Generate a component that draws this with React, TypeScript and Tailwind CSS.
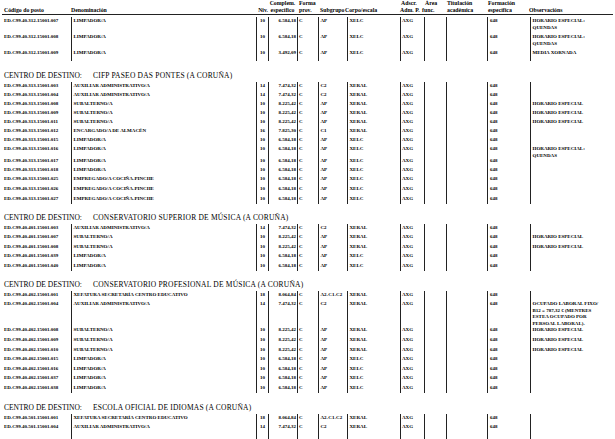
type Row = {
  code: string;
  den: string;
  niv: string;
  comp: string;
  sub: string;
  corpo: string;
  obs?: string[];
  h: string;
};

type Group = {
  title?: string;
  head: string;
  rows: Row[];
};

const LIMP = { den: "LIMPADOR/A", niv: "10", comp: "6.584,18", sub: "AP", corpo: "XELC" };
const SUBAL = { den: "SUBALTERNO/A", niv: "10", comp: "8.225,42", sub: "AP", corpo: "XERAL" };
const AUX = { den: "AUXILIAR ADMINISTRATIVO/A", niv: "14", comp: "7.474,32", sub: "C2", corpo: "XERAL" };
const COC = { den: "EMPREGADO/A COCIÑA-PINCHE", niv: "10", comp: "6.584,18", sub: "AP", corpo: "XELC" };
const XEF = { den: "XEFATURA SECRETARÍA CENTRO EDUCATIVO", niv: "18", comp: "8.064,84", sub: "A2-C1-C2", corpo: "XERAL" };
const HE = ["HORARIO ESPECIAL"];
const HEQ = ["HORARIO ESPECIAL:", "QUENDAS"];

const groups: Group[] = [
  {
    head: "h-[2px]",
    rows: [
      { code: "ED.C99.40.312.15001.007", ...LIMP, obs: HEQ, h: "h-[16px]" },
      { code: "ED.C99.40.312.15001.008", ...LIMP, obs: HEQ, h: "h-[16px]" },
      { code: "ED.C99.40.312.15001.009", ...LIMP, comp: "3.492,09", obs: ["MEDIA XORNADA"], h: "h-[12px]" },
    ],
  },
  {
    title: "CIFP PASEO DAS PONTES (A CORUÑA)",
    head: "h-[21px] pt-[11px]",
    rows: [
      { code: "ED.C99.40.313.15001.003", ...AUX, h: "h-[9px]" },
      { code: "ED.C99.40.313.15001.004", ...AUX, h: "h-[9px]" },
      { code: "ED.C99.40.313.15001.008", ...SUBAL, obs: HE, h: "h-[9px]" },
      { code: "ED.C99.40.313.15001.009", ...SUBAL, obs: HE, h: "h-[9px]" },
      { code: "ED.C99.40.313.15001.011", ...SUBAL, obs: HE, h: "h-[9px]" },
      { code: "ED.C99.40.313.15001.012", den: "ENCARGADO/A DE ALMACÉN", niv: "16", comp: "7.825,30", sub: "C1", corpo: "XERAL", h: "h-[9px]" },
      { code: "ED.C99.40.313.15001.015", ...LIMP, h: "h-[9px]" },
      { code: "ED.C99.40.313.15001.016", ...LIMP, obs: HEQ, h: "h-[12px]" },
      { code: "ED.C99.40.313.15001.017", ...LIMP, h: "h-[9px]" },
      { code: "ED.C99.40.313.15001.018", ...LIMP, h: "h-[9px]" },
      { code: "ED.C99.40.313.15001.025", ...COC, h: "h-[10px]" },
      { code: "ED.C99.40.313.15001.026", ...COC, h: "h-[10px]" },
      { code: "ED.C99.40.313.15001.027", ...COC, h: "h-[9px]" },
    ],
  },
  {
    title: "CONSERVATORIO SUPERIOR DE MÚSICA (A CORUÑA)",
    head: "h-[20px] pt-[10px]",
    rows: [
      { code: "ED.C99.40.401.15001.003", ...AUX, h: "h-[9px]" },
      { code: "ED.C99.40.401.15001.007", ...SUBAL, obs: HE, h: "h-[10px]" },
      { code: "ED.C99.40.401.15001.008", ...SUBAL, obs: HE, h: "h-[9px]" },
      { code: "ED.C99.40.401.15001.039", ...LIMP, h: "h-[10px]" },
      { code: "ED.C99.40.401.15001.040", ...LIMP, h: "h-[9px]" },
    ],
  },
  {
    title: "CONSERVATORIO PROFESIONAL DE MÚSICA (A CORUÑA)",
    head: "h-[20px] pt-[10px]",
    rows: [
      { code: "ED.C99.40.402.15001.001", ...XEF, h: "h-[9px]" },
      {
        code: "ED.C99.40.402.15001.004",
        ...AUX,
        obs: ["OCUPADO LABORAL FIXO/", "B12 = 787,32 € (MENTRES", "ESTEA OCUPADO POR", "PERSOAL LABORAL)."],
        h: "h-[26px]",
      },
      { code: "ED.C99.40.402.15001.008", ...SUBAL, obs: HE, h: "h-[10px]" },
      { code: "ED.C99.40.402.15001.009", ...SUBAL, obs: HE, h: "h-[10px]" },
      { code: "ED.C99.40.402.15001.010", ...SUBAL, obs: HE, h: "h-[9px]" },
      { code: "ED.C99.40.402.15001.015", ...LIMP, h: "h-[10px]" },
      { code: "ED.C99.40.402.15001.016", ...LIMP, h: "h-[9px]" },
      { code: "ED.C99.40.402.15001.037", ...LIMP, h: "h-[10px]" },
      { code: "ED.C99.40.402.15001.038", ...LIMP, h: "h-[9px]" },
    ],
  },
  {
    title: "ESCOLA OFICIAL DE IDIOMAS (A CORUÑA)",
    head: "h-[21px] pt-[11px]",
    rows: [
      { code: "ED.C99.40.501.15001.001", ...XEF, h: "h-[9px]" },
      { code: "ED.C99.40.501.15001.004", ...AUX, h: "h-[20px]" },
    ],
  },
];

const line = "border-l border-[#222] pt-[1px]";

function DataRow({ r }: { r: Row }) {
  return (
    <div className={`flex ${r.h}`}>
      <div className="w-[71px] shrink-0 pl-[4px] pt-[1px]">{r.code}</div>
      <div className={`w-[185px] shrink-0 pl-[1.5px] ${line}`}>{r.den}</div>
      <div className={`w-[12px] shrink-0 text-center ${line}`}>{r.niv}</div>
      <div className={`w-[29px] shrink-0 pr-[1px] text-right ${line}`}>{r.comp}</div>
      <div className={`w-[21px] shrink-0 pl-[1px] ${line}`}>C</div>
      <div className={`w-[29px] shrink-0 pl-[1.5px] ${line}`}>{r.sub}</div>
      <div className={`w-[53px] shrink-0 pl-[1.5px] ${line}`}>{r.corpo}</div>
      <div className={`w-[24px] shrink-0 pl-[1px] ${line}`}>AXG</div>
      <div className={`w-[22px] shrink-0 ${line}`} />
      <div className={`w-[41px] shrink-0 ${line}`} />
      <div className={`w-[43px] shrink-0 pl-[2px] ${line}`}>648</div>
      <div className={`flex-1 pl-[1.5px] ${line}`}>
        {r.obs?.map((o) => (
          <div key={o} className="leading-[6.5px] whitespace-nowrap">
            {o}
          </div>
        ))}
      </div>
    </div>
  );
}

function Header() {
  return (
    <div className="mx-[2px] flex h-[15px] items-end border-b border-[#222] pb-[1px] text-[5.8px] font-bold leading-[6.5px]">
      <div className="w-[69px] shrink-0 pl-[2px]">Código do posto</div>
      <div className="w-[185px] shrink-0">Denominación</div>
      <div className="w-[12px] shrink-0 text-right">Niv.</div>
      <div className="w-[29px] shrink-0 text-center">
        <div>Complem.</div>
        <div>específico</div>
      </div>
      <div className="w-[21px] shrink-0 pl-[2px]">
        <div>Forma</div>
        <div>prov.</div>
      </div>
      <div className="w-[29px] shrink-0 pl-[2px]">Subgrupo</div>
      <div className="w-[53px] shrink-0 -ml-[2px]">Corpo/escala</div>
      <div className="w-[24px] shrink-0 pl-[2px]">
        <div className="pl-[1px]">Adscr.</div>
        <div>Adm. P.</div>
      </div>
      <div className="w-[22px] shrink-0">
        <div className="pl-[3px]">Área</div>
        <div>func.</div>
      </div>
      <div className="w-[41px] shrink-0 pl-[3px]">
        <div>Titulación</div>
        <div>académica</div>
      </div>
      <div className="w-[43px] shrink-0 pl-[3px]">
        <div>Formación</div>
        <div>específica</div>
      </div>
      <div className="flex-1 pl-[1px]">Observacións</div>
    </div>
  );
}

export default function App() {
  return (
    <div className="h-[439px] w-[615px] overflow-hidden bg-white font-['Liberation_Serif','Times_New_Roman',serif] text-black">
      <Header />
      {groups.map((g, i) => (
        <div key={i}>
          <div className={`${g.head} pl-[4px] text-[7.5px] leading-[8px] whitespace-nowrap`}>
            {g.title && (
              <>
                <span className="inline-block w-[89px]">CENTRO DE DESTINO:</span>
                <span className="tracking-[0.2px]">{g.title}</span>
              </>
            )}
          </div>
          <div className="text-[5px] font-bold leading-[6px]">
            {g.rows.map((r) => (
              <DataRow key={r.code} r={r} />
            ))}
          </div>
        </div>
      ))}
    </div>
  );
}
